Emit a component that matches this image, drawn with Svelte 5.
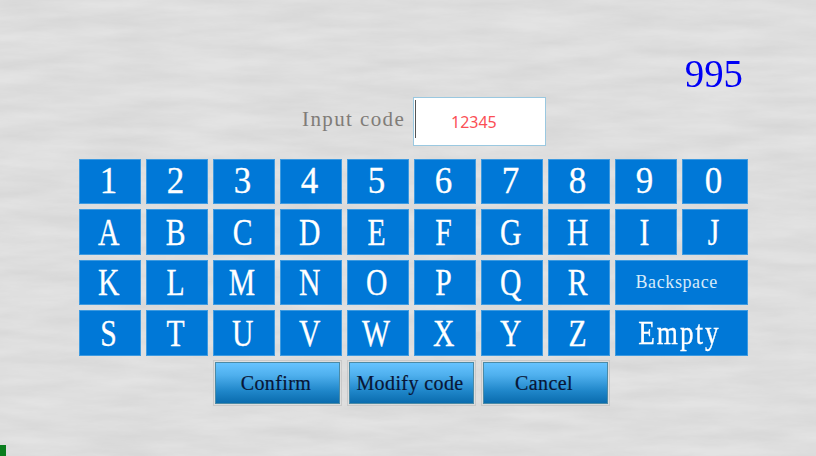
<script>
	const keys = [
		...'1234567890ABCDEFGHIJKLMNOPQR'.split(''),
		'Backspace',
		...'STUVWXYZ'.split(''),
		'Empty'
	]
	const isDigit = (k) => k >= '0' && k <= '9'
	const actions = ['Confirm', 'Modify code', 'Cancel']
	let code = $state('12345')
</script>

<div class="screen">
	<svg class="texture" width="816" height="456" aria-hidden="true">
		<filter id="brushed" x="0" y="0" width="100%" height="100%">
			<feTurbulence type="fractalNoise" baseFrequency="0.012 0.07" numOctaves="5" seed="11" />
			<feColorMatrix type="matrix" values="0 0 0 0 0.45  0 0 0 0 0.45  0 0 0 0 0.45  0.36 0 0 0 -0.07" />
		</filter>
		<rect width="816" height="456" fill="#e3e3e3" />
		<rect width="816" height="456" filter="url(#brushed)" />
	</svg>

	<div class="counter-row"><span class="counter">995</span></div>

	<div class="input-row">
		<span class="input-label">Input code</span>
		<div class="input-box">
			<span class="caret"></span>
			<span class="input-value">{code}</span>
		</div>
	</div>

	<div class="keypad">
		{#each keys as key}
			{#if key === 'Backspace'}
				<button class="key wide backspace">{key}</button>
			{:else if key === 'Empty'}
				<button class="key wide empty"><span class="empty-text">{key}</span></button>
			{:else}
				<button class="key">
					<span class={isDigit(key) ? 'glyph' : 'glyph narrow'}>{key}</span>
				</button>
			{/if}
		{/each}
	</div>

	<div class="actions">
		{#each actions as action}
			<div class="action-frame">
				<button class="action">{action}</button>
			</div>
		{/each}
	</div>

	<div class="status-dot"></div>
</div>

<style>
	:global(body) {
		margin: 0;
		background: #e2e2e2;
	}

	.screen {
		position: relative;
		width: 816px;
		height: 456px;
		overflow: hidden;
		display: flex;
		flex-direction: column;
	}

	.texture {
		position: absolute;
		inset: 0;
	}

	.counter-row {
		position: relative;
		height: 96.5px;
		display: flex;
		justify-content: flex-end;
		padding-right: 73px;
	}

	.counter {
		margin-top: 51px;
		height: 46px;
		font: 40px/46px 'Liberation Serif', serif;
		color: #0000f5;
		transform: scaleX(0.97);
		transform-origin: right;
	}

	.input-row {
		position: relative;
		height: 49px;
		display: flex;
		padding-left: 302px;
	}

	.input-label {
		width: 111px;
		height: 44px;
		font: 21px/44px 'Liberation Serif', serif;
		letter-spacing: 1.4px;
		white-space: pre;
		color: #807c78;
	}

	.input-box {
		position: relative;
		box-sizing: border-box;
		width: 133px;
		height: 49px;
		background: #fff;
		border: 1px solid #9ac8e0;
	}

	.caret {
		position: absolute;
		left: 1px;
		top: 2px;
		width: 1px;
		height: 38px;
		background: #555;
	}

	.input-value {
		position: absolute;
		left: 37px;
		top: 13px;
		font: 16px/22px 'Noto Sans', sans-serif;
		color: #fb4f55;
	}

	.keypad {
		position: relative;
		margin: 13px 0 0 79.4px;
		display: grid;
		grid-template-columns: repeat(9, 62px) 65.6px;
		grid-auto-rows: 45.5px;
		gap: 5px;
	}

	.key {
		box-sizing: border-box;
		border: 1px solid #3d9ae0;
		padding: 0;
		background: #0078d7;
		color: #fff;
		display: flex;
		align-items: center;
		justify-content: center;
		font: 38px/44px 'Liberation Serif', serif;
		-webkit-text-stroke: 0.3px #fff;
	}

	.glyph {
		display: inline-block;
		transform: translate(-2px, -1px) scaleX(0.92);
	}

	.glyph.narrow {
		transform: translateX(-2px) scaleX(0.78);
	}

	.wide {
		grid-column: span 2;
	}

	.backspace {
		padding-right: 10px;
		font: 18px/44px 'Liberation Serif', serif;
		letter-spacing: 0.6px;
		color: #d6ebfa;
		-webkit-text-stroke: 0;
	}

	.empty {
		padding-right: 4px;
		font: 34px/44px 'Liberation Serif', serif;
		letter-spacing: 2.4px;
	}

	.empty-text {
		display: inline-block;
		transform: scaleX(0.8);
	}

	.actions {
		position: relative;
		margin: 4.5px 0 0 213px;
		display: flex;
		gap: 5px;
	}

	.action-frame {
		box-sizing: border-box;
		width: 129px;
		height: 46px;
		padding: 1px;
		border: 1px solid #c9c9c9;
	}

	.action {
		box-sizing: border-box;
		width: 100%;
		height: 100%;
		padding: 0 3px 0 0;
		border: 1px solid #4b8aa6;
		background: linear-gradient(#66c3ff, #4fb0ee 30%, #1f86c9 70%, #0a6cae);
		color: #071535;
		font: 20px/40px 'Liberation Serif', serif;
		letter-spacing: 0.4px;
		-webkit-text-stroke: 0.2px #071535;
	}

	.status-dot {
		position: absolute;
		left: 0;
		top: 445px;
		width: 6px;
		height: 11px;
		background: #0a7d1e;
	}
</style>
